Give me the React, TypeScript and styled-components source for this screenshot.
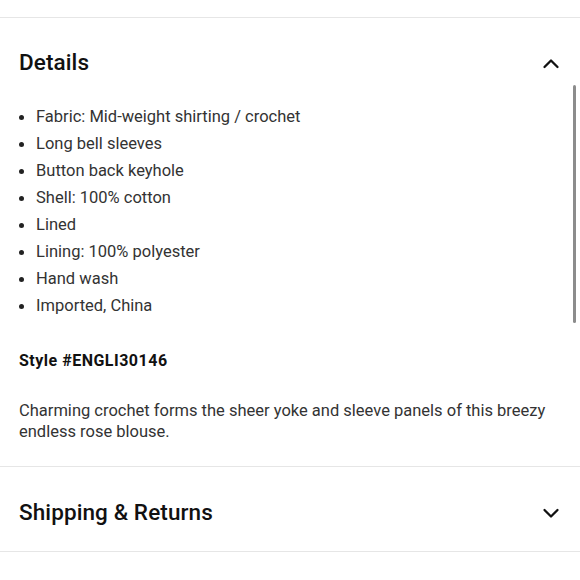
import React from "react";
import styled, { createGlobalStyle } from "styled-components";

const Global = createGlobalStyle`
  html, body {
    margin: 0;
    padding: 0;
    background: #fff;
  }
  body {
    font-family: "Roboto", "Liberation Sans", sans-serif;
    color: #222;
  }
`;

const Page = styled.div`
  position: relative;
  width: 580px;
  height: 580px;
  overflow: hidden;
  background: #fff;
  padding-top: 17px;
  box-sizing: border-box;
`;

const Section = styled.section`
  border-top: 1px solid #e6e6e6;
`;

const Header = styled.div<{ $height: number; $shift?: number }>`
  display: flex;
  align-items: center;
  justify-content: space-between;
  padding: ${(p) => p.$shift ?? 0}px 19px 0;
  height: ${(p) => p.$height}px;
  box-sizing: border-box;
`;

const Title = styled.h2`
  margin: 0;
  font-size: 22.5px;
  font-weight: 500;
  color: #111;
  letter-spacing: 0.1px;
`;

const Body = styled.div`
  padding: 0 19px 24px;
`;

const List = styled.ul`
  margin: -3px 0 0;
  padding: 0 0 0 17px;
  list-style: none;
`;

const Item = styled.li`
  position: relative;
  font-size: 16.5px;
  line-height: 27px;
  color: #333;
  &::before {
    content: "";
    position: absolute;
    left: -17px;
    top: 12px;
    width: 5px;
    height: 5px;
    border-radius: 50%;
    background: #222;
  }
`;

const StyleNo = styled.div`
  margin-top: 32px;
  font-size: 16px;
  font-weight: 700;
  letter-spacing: 0.5px;
  color: #111;
`;

const Desc = styled.p`
  margin: 30px 0 0;
  font-size: 16.5px;
  line-height: 21px;
  color: #333;
`;

const Scrollbar = styled.div`
  position: absolute;
  right: 4px;
  top: 85px;
  width: 3px;
  height: 238px;
  border-radius: 2px;
  background: #8c8c8c;
`;

const ChevronBox = styled.svg<{ $drop?: number }>`
  margin-top: ${(p) => p.$drop ?? 0}px;
`;

const Chevron = ({ up, drop }: { up?: boolean; drop?: number }) => (
  <ChevronBox $drop={drop} width="20" height="20" viewBox="0 0 20 20" fill="none">
    <path
      d={up ? "M3.5 13 L10 6.5 L16.5 13" : "M3.5 7 L10 13.5 L16.5 7"}
      stroke="#111"
      strokeWidth="2.3"
      strokeLinecap="round"
      strokeLinejoin="round"
    />
  </ChevronBox>
);

const items = [
  "Fabric: Mid-weight shirting / crochet",
  "Long bell sleeves",
  "Button back keyhole",
  "Shell: 100% cotton",
  "Lined",
  "Lining: 100% polyester",
  "Hand wash",
  "Imported, China",
];

export default function App() {
  return (
    <Page>
      <Global />
      <Section>
        <Header $height={88}>
          <Title>Details</Title>
          <Chevron up drop={4} />
        </Header>
        <Body>
          <List>
            {items.map((t) => (
              <Item key={t}>{t}</Item>
            ))}
          </List>
          <StyleNo>Style #ENGLI30146</StyleNo>
          <Desc>
            Charming crochet forms the sheer yoke and sleeve panels of this breezy endless rose blouse.
          </Desc>
        </Body>
      </Section>
      <Section>
        <Header $height={84} $shift={6}>
          <Title>Shipping &amp; Returns</Title>
          <Chevron drop={2} />
        </Header>
      </Section>
      <Section />
      <Scrollbar />
    </Page>
  );
}
